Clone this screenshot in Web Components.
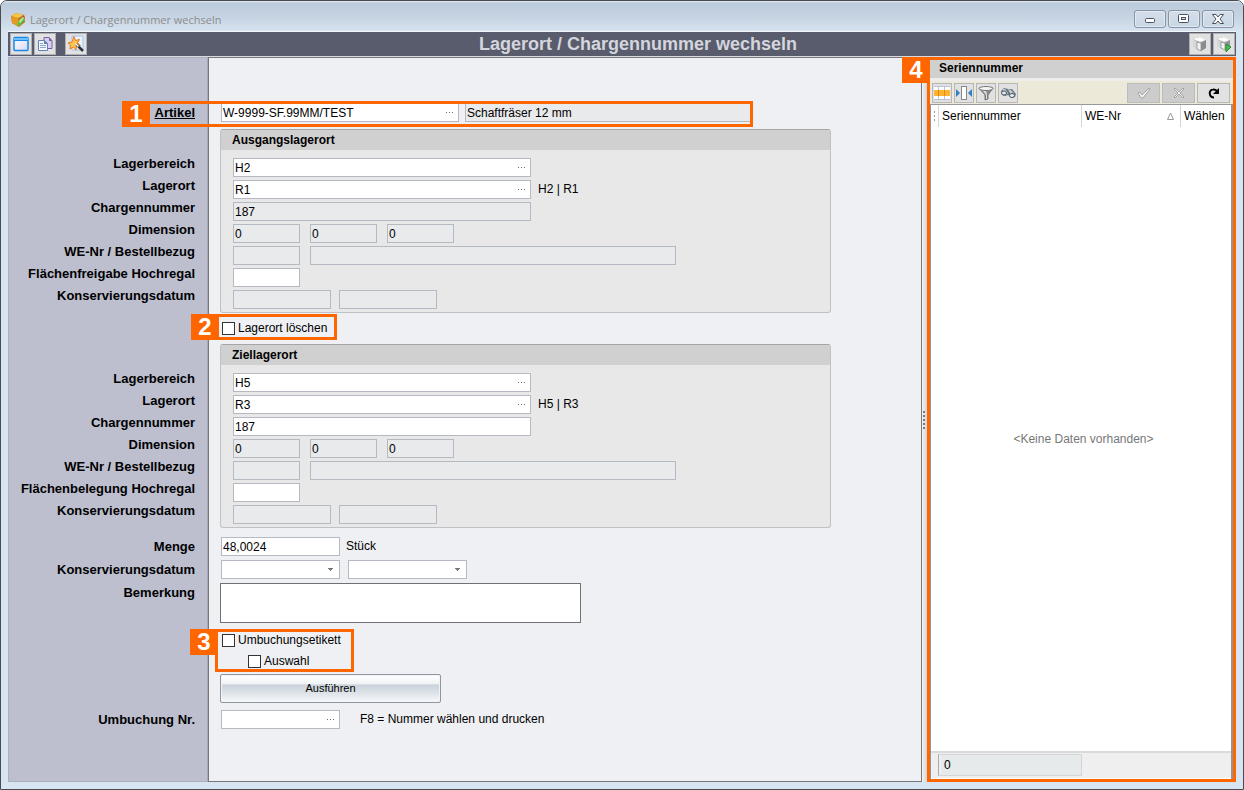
<!DOCTYPE html>
<html lang="de">
<head>
<meta charset="utf-8">
<meta name="viewport" content="width=device-width, initial-scale=1">
<title>Lagerort / Chargennummer wechseln</title>
<style>
  html, body { margin: 0; }
  body { background: #fff; color: #000; font: 12px/15px "Liberation Sans", Arial, sans-serif; }
</style>
</head>
<body>
<app-window caption="Lagerort / Chargennummer wechseln">
  <tool-strip slot="toolbar" caption="Lagerort / Chargennummer wechseln"></tool-strip>
  <relocation-form></relocation-form>
  <split-grip></split-grip>
  <serial-panel></serial-panel>
</app-window>

<script>
const define = (name, html, setup) => {
  const template = document.createElement('template');
  template.innerHTML = html;
  customElements.define(name, class extends HTMLElement {
    constructor() {
      super();
      this.attachShadow({ mode: 'open' }).append(template.content.cloneNode(true));
    }
    connectedCallback() { if (setup) setup(this, this.shadowRoot); }
  });
};

/* Outer window frame with title bar */
define('app-window', `
<style>
  :host { display: flex; flex-direction: column; box-sizing: border-box; min-height: 100vh;
    border: 1px solid #4a4b50; border-radius: 7px 7px 0 0; padding: 0 7px 7px; background: #d7e4f1; }
  header { display: flex; align-items: center; gap: 4px; height: 31px; margin: 0 -7px; padding: 0 9px;
    background: linear-gradient(#e6eef6 0, #bccbdb 2px, #c5d3e2 50%, #d7e4f1 100%); border-radius: 6px 6px 0 0; }
  h1 { flex: 1; margin: 0; padding-top: 6px; font: 11px/16px "Open Sans", "Noto Sans", sans-serif; color: #8d8d8d; }
  header > svg { margin-top: 6px; }
  .ctl { display: flex; gap: 2px; padding-top: 5px; }
  .ctl button { width: 32px; height: 18px; padding: 0; display: grid; place-items: center;
    border: 1px solid #8792a3; border-radius: 3px; background: linear-gradient(#d3deea, #c9d6e4); box-shadow: inset 0 0 0 1px #e2eaf3; }
  .body { flex: 1; display: flex; }
</style>
<header>
  <svg width="16" height="16" viewBox="0 0 16 16" aria-hidden="true">
    <path d="M1 4 6 1l8 2 1 7-6 5-7-4z" fill="#b87a16"/><path d="M1 4 6 1l8 2-6 3z" fill="#f6c64a"/>
    <path d="M1 4l7 2 1 9-7-4z" fill="#e59a25"/><path d="M7 14l1-4 5-5 2 2-5 6z" fill="#55c84b"/><path d="M12 4l2-1 1 3-1 1z" fill="#df493b"/><path d="M9 9l4-4 1 1-4 5z" fill="#b6efaa"/>
  </svg>
  <h1></h1>
  <div class="ctl">
    <button type="button" aria-label="Minimieren"><svg width="14" height="12"><rect x="2.5" y="5.5" width="9" height="4" rx="1" fill="#fff" stroke="#4b5260"/></svg></button>
    <button type="button" aria-label="Wiederherstellen"><svg width="14" height="12"><rect x="1.5" y="1.5" width="10" height="8" rx="1" fill="#fff" stroke="#4b5260"/><rect x="4.5" y="4.5" width="4" height="2" fill="#d6e0eb" stroke="#4b5260"/></svg></button>
    <button type="button" aria-label="Schließen"><svg width="14" height="12"><path d="M1.5 1.5h3.5L7 4l2-2.500h3.500L9 6l3.500 4.500H9L7 8l-2 2.500H1.500L5 6z" fill="#fff" stroke="#4b5260"/></svg></button>
  </div>
</header>
<slot name="toolbar"></slot>
<div class="body"><slot></slot></div>
`, (el, root) => { root.querySelector('h1').textContent = el.getAttribute('caption'); });

/* Dark strip with tool buttons and the centred heading */
define('tool-strip', `
<style>
  :host { display: flex; align-items: center; gap: 2px; height: 24px; padding: 0 1px 0 2px; background: #585c6c;
    border-top: 1px solid #f4f7fa; margin-top: -1px; border-bottom: 1px solid #d9d9df; }
  button { width: 22px; height: 22px; padding: 0; display: grid; place-items: center; border: 1px solid #aeb0b4; background: #e1e1e1; }
  .wand { margin-left: 7px; }
  h2 { flex: 1; margin: 0; text-align: center; font-size: 18px; line-height: 22px; font-weight: bold; color: #d4d5dd; }
</style>
<button type="button" aria-label="Maske"><svg width="18" height="18"><defs><linearGradient id="w" x2="1" y2="1"><stop stop-color="#fff"/><stop offset="1" stop-color="#d9d6f5"/></linearGradient></defs><rect x="2" y="2.5" width="14" height="13" rx="1" fill="url(#w)" stroke="#1787e8" stroke-width="1.5"/><path d="M2 3h14v2H2z" fill="#6fc0ff"/><path d="M2 5.5h14" stroke="#1787e8"/></svg></button>
<button type="button" aria-label="Kopieren"><svg width="18" height="18"><path d="M8 2.5h5l3 3v8H8z" fill="#d9cff0" stroke="#7560a8"/><path d="M13 2v4h3z" fill="#7560a8"/><path d="M2.5 5.5h6l3 3v7h-9z" fill="#f3f7ff" stroke="#6480b4"/><path d="M8 5v4h4z" fill="#6480b4"/><path d="M4 8.5h3M4 10.5h6M4 12.5h6" stroke="#8ba5cf"/></svg></button>
<button type="button" class="wand" aria-label="Assistent"><svg width="18" height="18"><path d="M5 1h11v14H5z" fill="#e8f1ff" stroke="#a7c3ec"/><path d="M7 1.500l1.500 4 4-1-2 3.500 3 2.500-4 .5-.5 4L6.500 12 3 14l.5-4L1 8l4-1z" fill="#ffc350" stroke="#e87d1c"/><path d="M9 9l7 7" stroke="#30343d" stroke-width="2.5"/><path d="M8.500 8.500l3 3" stroke="#fff" stroke-width="1.5"/></svg></button>
<h2></h2>
<button type="button" aria-label="Würfel"><svg width="18" height="18"><path d="M2 4l7-2 6 3v8l-5 3-4-2-4-3z" fill="#b0b3b5"/><path d="M2 4l7-2 6 3-6 2z" fill="#fafafa"/><path d="M2 4l4 3v7l-4-3z" fill="#d5d8d6"/><path d="M6 7l4 1v8l-4-2z" fill="#f2f2f2" stroke="#858789" stroke-width=".7"/><path d="M10 8l5-3v8l-5 3z" fill="#8a8d90"/></svg></button>
<button type="button" aria-label="Würfel ausführen"><svg width="18" height="18"><path d="M2 4l7-2 6 3v7l-5 3-4-2-4-3z" fill="#b0b3b5"/><path d="M2 4l7-2 6 3-6 2z" fill="#fafafa"/><path d="M2 4l4 3v7l-4-3z" fill="#d5d8d6"/><path d="M6 7l4 1v7l-4-2z" fill="#f2f2f2" stroke="#858789" stroke-width=".7"/><path d="M10 8l5-3v7l-5 3z" fill="#909496"/><path d="M11 9l5 3-5 5z" fill="#4bc34b" stroke="#238a30"/></svg></button>
`, (el, root) => { root.querySelector('h2').textContent = el.getAttribute('caption'); });

/* Numbered orange frame laid over the controls it points at */
define('callout-mark', `
<style>
  :host { display: block; position: absolute; z-index: 2; box-sizing: border-box; border: 3px solid #f60; pointer-events: none; }
  span { position: absolute; top: -3px; left: -28px; width: 28px; height: 26px; background: #f60; color: #fff;
    font-weight: bold; font-size: 24px; line-height: 26px; text-align: center; }
</style>
<span><slot></slot></span>
`);

/* One line of the form: label in the side column, controls right of it */
define('field-row', `
<style>
  :host { display: grid; grid-template-columns: 187px 1fr; column-gap: var(--inset, 26px); position: relative; min-height: 19px; }
  .label { display: flex; justify-content: flex-end; align-items: flex-start; text-align: right; white-space: nowrap;
    font-size: 13px; font-weight: bold; line-height: var(--label-line, 19px); }
  .fields { display: flex; align-items: center; gap: var(--gap, 8px); white-space: nowrap; }
</style>
<div class="label"><slot name="label"></slot></div>
<div class="fields"><slot></slot></div>
`);

/* Titled frame behind the field part of its rows */
define('field-group', `
<style>
  :host { display: grid; --inset: 38px; --label-line: 11px; --gap: 7px; }
  .frame, .rows { grid-area: 1 / 1; }
  .frame { margin: 0 91px 0 212px; border: 1px solid #c0c1c4; border-top-color: #a6a6a6; border-radius: 3px; background: #e8e8e8; overflow: hidden; }
  h3 { margin: 0; padding-left: 11px; height: 20px; font-size: 12px; line-height: 20px; font-weight: bold; background: #d0d0d0; }
  .rows { display: flex; flex-direction: column; gap: 3px; padding: 29px 0 4px; z-index: 1; }
</style>
<div class="frame"><h3></h3></div>
<div class="rows"><slot></slot></div>
`, (el, root) => { root.querySelector('h3').textContent = el.getAttribute('caption'); });

/* Adds a lookup button or a drop-down arrow at the end of the field */
define('field-box', `
<style>
  :host { display: inline-grid; align-items: center; }
  slot, button, .arrow { grid-area: 1 / 1; }
  ::slotted(*) { grid-area: 1 / 1; }
  button, .arrow { display: none; justify-self: end; }
  :host([kind=lookup]) button { display: grid; place-items: center; width: 17px; height: 17px; padding: 0; border: 0; background: none; }
  :host([kind=drop]) .arrow { display: block; margin-right: 7px; pointer-events: none; z-index: 1; }
</style>
<slot></slot>
<button type="button" aria-label="Auswählen"><svg width="9" height="3"><path d="M0 1h1v1H0zM3 1h1v1H3zM6 1h1v1H6z" fill="#666"/></svg></button>
<svg class="arrow" width="5" height="3"><path d="M0 0h5v1H4v1H3v1H2V2H1V1H0z" fill="#777"/></svg>
`);

/* The booking form */
define('relocation-form', `
<style>
  :host { flex: 1; min-width: 0; display: grid; grid-template-columns: 200px 1fr; }
  .side, .main, form { grid-row: 1; }
  .side { grid-column: 1; background: #bdbfcf; border: 1px solid #adafc0; border-right-color: #a6a8b8; }
  .main { grid-column: 2; background: #eff0f3; border: 1px solid #77787c; }
  form { grid-column: 1 / -1; display: flex; flex-direction: column; padding: 46px 0 40px; z-index: 1; }
  input, select, textarea { box-sizing: border-box; margin: 0; padding: 0 1px; height: 19px; border: 1px solid #b4b9c2; border-radius: 0;
    background: #fff; color: #000; font: inherit; }
  select { appearance: none; }
  input[readonly] { background: #e9eaec; }
  input[type=checkbox] { appearance: none; width: 13px; height: 13px; padding: 0; border-color: #333; }
  .w-wide { width: 298px; } .w-art { width: 238px; } .w-desc { width: 286px; }
  .w-s { width: 67px; } .w-date { width: 98px; } .w-m { width: 119px; } .w-order { width: 366px; }
  .key { text-decoration: underline; }
  .dims { --gap: 10px; }
  .dates { --gap: 8px; }
  .tight { --gap: 6px; }
  .check { --gap: 3px; --inset: 27px; }
  .sub { --inset: 53px; }
  .block { --inset: 25px; }
  .g2 { margin-top: 2px; } .g3 { margin-top: 3px; } .g4 { margin-top: 4px; } .g6 { margin-top: 6px; }
  .g7 { margin-top: 7px; } .g8 { margin-top: 8px; } .g9 { margin-top: 9px; }
  .hint { margin-left: 12px; }
  textarea { width: 361px; height: 40px; border-color: #6f7177; resize: none; display: block; }
  .run { width: 221px; height: 29px; padding: 0; border: 1px solid #8f97a3; border-radius: 2px; font: inherit; font-size: 11px; color: #000;
    background: linear-gradient(#fff 0, #f0f2f5 34%, #c9d1da 36%, #d9dfe5 60%, #f7f8fa 100%); box-shadow: inset 0 0 0 1px #f1f3f6; }
  .c1 { left: 139px; top: -2px; width: 606px; height: 26px; }
  .c2 { left: 208px; top: -5px; width: 121px; height: 26px; }
  .c3 { left: 207px; top: -2px; width: 139px; height: 43px; }
</style>
<div class="side"></div>
<div class="main"></div>
<form>
  <field-row class="tight">
    <label slot="label" class="key" for="artikel">Artikel</label>
    <field-box kind="lookup"><input id="artikel" class="w-art" value="W-9999-SF.99MM/TEST"></field-box>
    <input class="w-desc" aria-label="Artikelbezeichnung" value="Schaftfräser 12 mm" readonly>
    <callout-mark class="c1">1</callout-mark>
  </field-row>

  <field-group caption="Ausgangslagerort" class="g7">
    <field-row><label slot="label" for="a1">Lagerbereich</label><field-box kind="lookup"><input id="a1" class="w-wide" value="H2"></field-box></field-row>
    <field-row><label slot="label" for="a2">Lagerort</label><field-box kind="lookup"><input id="a2" class="w-wide" value="R1"></field-box><span>H2 | R1</span></field-row>
    <field-row><label slot="label" for="a3">Chargennummer</label><input id="a3" class="w-wide" value="187" readonly></field-row>
    <field-row class="dims"><label slot="label" for="a4">Dimension</label><input id="a4" class="w-s" value="0" readonly><input class="w-s" aria-label="Dimension 2" value="0" readonly><input class="w-s" aria-label="Dimension 3" value="0" readonly></field-row>
    <field-row class="dims"><label slot="label" for="a5">WE-Nr / Bestellbezug</label><input id="a5" class="w-s" readonly><input class="w-order" aria-label="Bestellbezug" readonly></field-row>
    <field-row><label slot="label" for="a6">Flächenfreigabe Hochregal</label><input id="a6" class="w-s"></field-row>
    <field-row class="dates"><label slot="label" for="a7">Konservierungsdatum</label><input id="a7" class="w-date" readonly><input class="w-date" aria-label="Konservierungsdatum bis" readonly></field-row>
  </field-group>

  <field-row class="check g6"><input type="checkbox" id="del"><label for="del">Lagerort löschen</label><callout-mark class="c2">2</callout-mark></field-row>

  <field-group caption="Ziellagerort" class="g6">
    <field-row><label slot="label" for="z1">Lagerbereich</label><field-box kind="lookup"><input id="z1" class="w-wide" value="H5"></field-box></field-row>
    <field-row><label slot="label" for="z2">Lagerort</label><field-box kind="lookup"><input id="z2" class="w-wide" value="R3"></field-box><span>H5 | R3</span></field-row>
    <field-row><label slot="label" for="z3">Chargennummer</label><input id="z3" class="w-wide" value="187"></field-row>
    <field-row class="dims"><label slot="label" for="z4">Dimension</label><input id="z4" class="w-s" value="0" readonly><input class="w-s" aria-label="Dimension 2" value="0" readonly><input class="w-s" aria-label="Dimension 3" value="0" readonly></field-row>
    <field-row class="dims"><label slot="label" for="z5">WE-Nr / Bestellbezug</label><input id="z5" class="w-s" readonly><input class="w-order" aria-label="Bestellbezug" readonly></field-row>
    <field-row><label slot="label" for="z6">Flächenbelegung Hochregal</label><input id="z6" class="w-s"></field-row>
    <field-row class="dates"><label slot="label" for="z7">Konservierungsdatum</label><input id="z7" class="w-date" readonly><input class="w-date" aria-label="Konservierungsdatum bis" readonly></field-row>
  </field-group>

  <field-row class="tight g9"><label slot="label" for="menge">Menge</label><input id="menge" class="w-m" value="48,0024"><span>Stück</span></field-row>
  <field-row class="g4"><label slot="label" for="k1">Konservierungsdatum</label>
    <field-box kind="drop"><select id="k1" class="w-m"><option></option></select></field-box>
    <field-box kind="drop"><select class="w-m" aria-label="Konservierungsdatum bis"><option></option></select></field-box></field-row>
  <field-row class="block g4"><label slot="label" for="bem">Bemerkung</label><textarea id="bem"></textarea></field-row>
  <field-row class="check g8"><input type="checkbox" id="etikett"><label for="etikett">Umbuchungsetikett</label><callout-mark class="c3">3</callout-mark></field-row>
  <field-row class="check sub g2"><input type="checkbox" id="auswahl"><label for="auswahl">Auswahl</label></field-row>
  <field-row class="block g3"><button type="button" class="run">Ausführen</button></field-row>
  <field-row class="g7"><label slot="label" for="nr">Umbuchung Nr.</label><field-box kind="lookup"><input id="nr" class="w-m"></field-box><span class="hint">F8 = Nummer wählen und drucken</span></field-row>
</form>
`);

define('split-grip', `
<style>
  :host { width: 5px; display: flex; flex-direction: column; justify-content: center; align-items: flex-start;
    background: linear-gradient(90deg, #f2f2f4, #d3d4d9); }
  svg { display: block; }
</style>
<svg width="4" height="20"><path d="M1 2h2M1 6h2M1 10h2M1 14h2M1 18h2" stroke="#77797e" stroke-width="2"/></svg>
`);

/* Serial number list */
define('serial-panel', `
<style>
  :host { position: relative; width: 309px; box-sizing: border-box; padding: 3px; display: flex; flex-direction: column; background: #8e959c; }
  callout-mark { inset: 0; }
  h3 { margin: 0; padding-left: 9px; height: 18px; font-size: 12px; line-height: 16px; font-weight: bold; background: #d0d0d0; border-bottom: 3px solid #ededee; }
  .bar { display: flex; align-items: center; gap: 2px; height: 23px; padding: 0 3px 0 2px; background: #ece9d8; border-bottom: 1px solid #999; }
  .bar button { width: 20px; height: 20px; padding: 0; display: grid; place-items: center; border: 1px solid #b5b7ba; background: #e1e1e1; }
  .bar .wide { width: 33px; }
  .bar .wide:disabled { background: #ccc; border-color: #bcbcbc; }
  .push { flex: 1; }
  .list { flex: 1; display: flex; flex-direction: column; background: #fff; margin: 0 2px 0 1px; }
  table { flex: 1; display: grid; grid-template-rows: auto 1fr; grid-template-columns: 1fr; }
  tr { display: grid; }
  thead tr { grid-template-columns: 8px 143px 99px 1fr; height: 22px; }
  tbody tr { height: 100%; align-items: center; justify-items: center; }
  th { display: flex; align-items: center; justify-content: space-between; padding: 0 6px 0 3px; font-weight: normal; text-align: left; border-right: 1px solid #d5d5d5; }
  th:first-child { padding: 0 0 0 3px; } th:last-child { border: 0; padding-right: 0; }
  td { padding: 0 0 0 5px; color: #777; }
  footer { box-sizing: border-box; display: flex; height: 27px; padding: 1px 0 2px 7px; background: #efefef; border-top: 2px solid #dadada; margin-bottom: 1px; }
  output { box-sizing: border-box; width: 144px; border: 1px solid #d3d5d9; border-left: 1px solid #aaa; background: #e6eaea; padding-left: 5px; line-height: 21px; box-shadow: inset 2px 0 #efefef; }
</style>
<h3>Seriennummer</h3>
<div class="bar">
  <button type="button" aria-label="Spalten"><svg width="18" height="18"><path d="M1 2h16v14H1z" fill="#b9c1d4"/><path d="M1 3h4v3H1zM6 3h5v3H6zM12 3h5v3h-5zM1 12h4v3H1zM6 12h5v3H6zM12 12h5v3h-5z" fill="#fff"/><path d="M1 6h16v6H1z" fill="#ffb32e"/><path d="M5.500 6v6M11.500 6v6" stroke="#e08a17"/></svg></button>
  <button type="button" aria-label="Spaltenbreite"><svg width="18" height="18"><rect x="6.5" y="2.5" width="5" height="13" fill="#fff" stroke="#888"/><path d="M1 5v8l4-4zM17 5v8l-4-4z" fill="#2f7fc6"/></svg></button>
  <button type="button" aria-label="Filter"><svg width="18" height="18"><path d="M2 4l6 7v5l3-1v-4l5-7z" fill="#8b8b8b" stroke="#666" stroke-width=".8"/><path d="M6 7l3 4v4h1v-5L9 7z" fill="#ddd"/><ellipse cx="9" cy="4.5" rx="7" ry="2" fill="#f4f4f4" stroke="#777"/></svg></button>
  <button type="button" aria-label="Suchen"><svg width="18" height="18"><path d="M2 7l3-3 4 1 4 0 4 5-1 3-3 1-4-3-3 1-3-1z" fill="#6d7a84"/><path d="M4 5l2 0 3 4-2 2-3-3zM9 5l3 1 3 4-3 1z" fill="#c4cfd6"/><ellipse cx="5" cy="9" rx="2.5" ry="2" fill="#e3eef4" stroke="#4d5962"/><ellipse cx="13" cy="11.500" rx="2.500" ry="2" fill="#e3eef4" stroke="#4d5962"/></svg></button>
  <span class="push"></span>
  <button type="button" class="wide" aria-label="Übernehmen" disabled><svg width="16" height="14"><path d="M2 7l2-1 2 3 7-7 1 1-7 9H5z" fill="#f0f0f0" stroke="#a4a4a4"/></svg></button>
  <button type="button" class="wide" aria-label="Verwerfen" disabled><svg width="14" height="14"><path d="M2 3l1-1 4 4 4-4 1 1-4 4 4 4-1 1-4-4-4 4-1-1 4-4z" fill="#f0f0f0" stroke="#a4a4a4"/></svg></button>
  <button type="button" class="wide" aria-label="Aktualisieren"><svg width="14" height="14"><path d="M7 11.500C2 11.500 1 4 6 3.500c2-.3 3 .5 4 1.500" fill="none" stroke="#000" stroke-width="2"/><path d="M12 2v6H6z" fill="#000"/></svg></button>
</div>
<div class="list">
  <table>
    <thead><tr><th scope="col" aria-label="Markierung"><svg width="2" height="10"><path d="M0 1h1M0 5h1M0 9h1" stroke="#333"/></svg></th><th scope="col">Seriennummer</th><th scope="col">WE-Nr <svg width="7" height="8"><path d="M.5 7.500 3.500 1l3 6.500z" fill="none" stroke="#999"/></svg></th><th scope="col">Wählen</th></tr></thead>
    <tbody><tr><td colspan="4">&lt;Keine Daten vorhanden&gt;</td></tr></tbody>
  </table>
  <footer><output>0</output></footer>
</div>
<callout-mark>4</callout-mark>
`);
</script>
</body>
</html>
